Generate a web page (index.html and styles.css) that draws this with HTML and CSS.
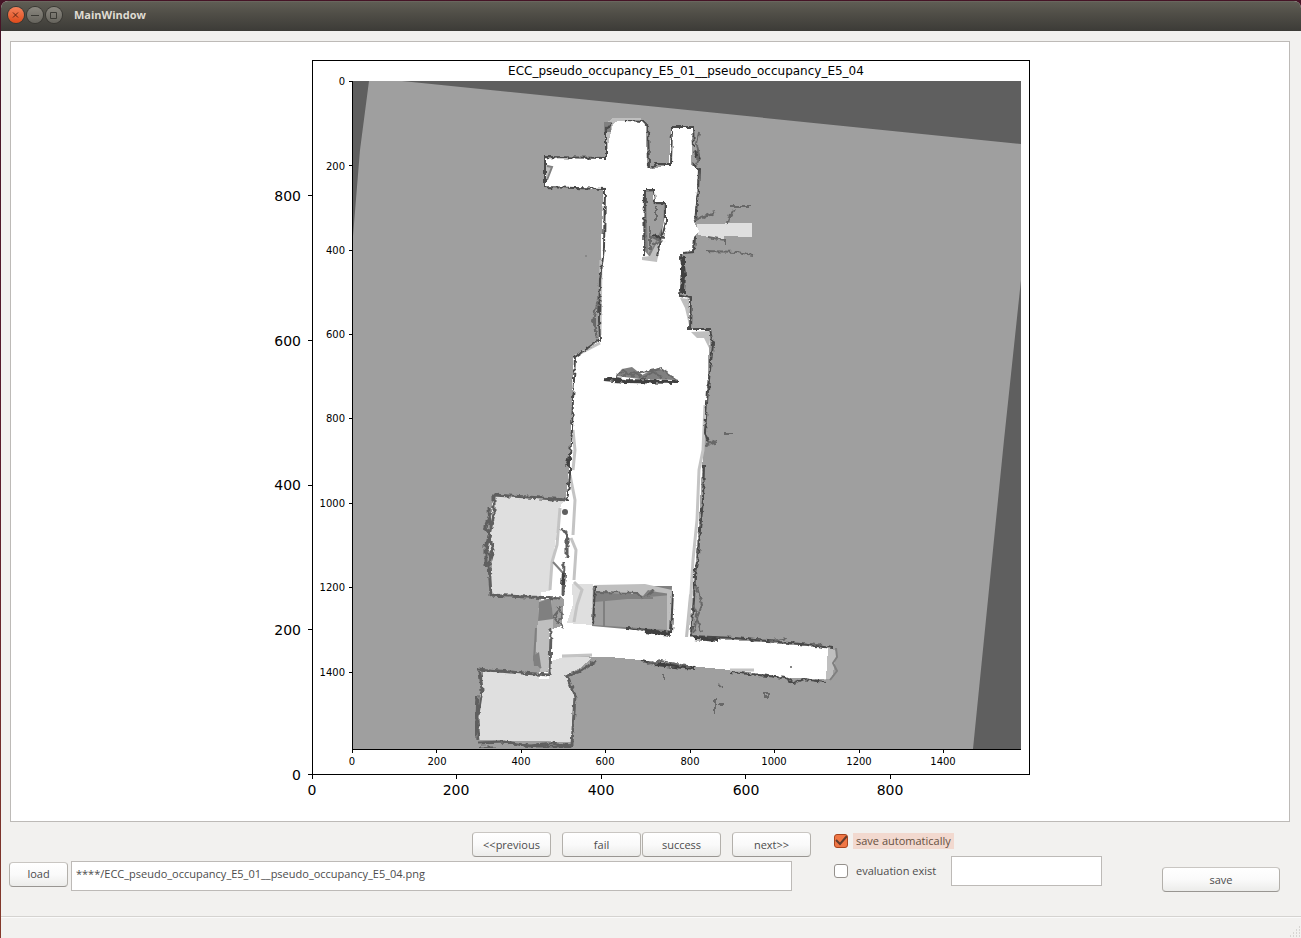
FILE: index.html
```html
<!DOCTYPE html>
<html lang="en">
<head>
<meta charset="utf-8">
<title>MainWindow</title>
<link rel="stylesheet" href="styles.css">
</head>
<body>
<div class="window">
  <header class="titlebar">
    <button class="win-btn close" type="button" aria-label="Close"><svg viewBox="0 0 16 16"><path d="M5 5.500l5 5m0-5l-5 5"/></svg></button>
    <button class="win-btn" type="button" aria-label="Minimize"><svg viewBox="0 0 16 16"><path d="M4 8.500h8"/></svg></button>
    <button class="win-btn" type="button" aria-label="Maximize"><svg viewBox="0 0 16 16"><path d="M4.500 5.500h6v6h-6z"/></svg></button>
    <h1 class="title">MainWindow</h1>
  </header>
  <main class="content">
    <section class="canvas">
      <svg class="figure" viewBox="11 42 1278 779" role="img" aria-label="Occupancy map overlay">
        <defs>
          <filter id="rough" x="0" y="0" width="1" height="1">
            <feTurbulence type="fractalNoise" baseFrequency="0.22" numOctaves="2" seed="4" result="n"/>
            <feDisplacementMap in="SourceGraphic" in2="n" scale="5" xChannelSelector="R" yChannelSelector="G"/>
          </filter>
          <clipPath id="area"><rect x="353" y="81" width="668" height="668"/></clipPath>
        </defs>
        <g clip-path="url(#area)">
          <rect class="g-mid" x="353" y="81" width="668" height="668"/>
          <path class="g-dark" d="M353 81h16L360 150 353 236zM402 81L1021 144V81zM1021 280L1004 440 973 749h48z"/>

          <g class="regions">
            <path class="g-pale" d="M494 496L562 499 566 540 561 597 490 594 492 560 488 545 490 515zM481 672L550 674 566 657 592 658 580 668 566 675 575 695 572 742 478 740 480 705z"/>
            <path class="g-pale" d="M697 224L752 223V237L724 236 724 240 698 235z"/>
            <path class="g-light" d="M539 600L552 600 553 634 549 640 549 670 541 674 536 650zM604 125L613 118H641V126L612 158H606zM828 646L837 652 832 678 824 680z"/>
            <path class="g-white" d="M606 158L609 140 613 124 618 121 641 121 646 125 647 168 653 169 669 164 671 127 693 127 691 165 698 168 697 190 694 222 699 231 694 236 693 251 681 254 680 296 690 298 690 329 711 330 708 360 707 400 704 440 702 470 699 520 696 560 693 590 690 637 760 642 828 648 826 679 790 678 740 671 700 667 640 660 610 657 570 656 561 668 549 668 549 630 562 626 564 600 561 596 541 600 541 592 550 591 552 565 557 530 559 512 563 500 566 497 569 470 571 440 573 358 599 341 600 300 601 250 603 189 545 187 545 158z"/>
            <path class="g-pale" d="M572 584L593 584 592 625 567 623 573 605zM548 662L566 656 590 657 566 675 548 672z"/>
            <path class="g-white" d="M539 672h10v7h-10z"/>
          </g>

          <path class="g-soft" d="M539 602L551 598 553 619 538 621zM645 190H653V202L666 203 665 215 657 259 649 256 644 250zM593 586H672L670 633 592 626zM604 122h7v10h-7zM533 656l6-4 2 14h-7z"/>
          <path class="g-mid" d="M646 192L653 192V204L664 205 663 225 654 245 648 254zM595 602L671 595 669 630 594 625z"/>
          <path class="g-light" d="M594 585L645 584 672 590 671 594 657 592 648 590 643 596 637 594 610 593 596 591zM667 593L673 592 672 632 667 632zM653 250L661 235 657 262 642 260 642 257 650 256zM685 637L689 595 693 590 688 637zM680 298L689 299 689 325 685 308zM691 332L711 331 709 348 704 338 697 338zM546 164l6 3-6 13z"/>
          <path class="s-light" d="M575 356L600 343M573 430L575 450 573 470M570 475L575 500 573 535M571 538L576 550 574 580M705 405L703 450 699 470 697 520 693 560 689 625M560 508L557 545 552 562 550 590M601 260L600 335M574 582L582 590 577 605 574 622M562 656l30-1M730 670h24"/>
          <path class="g-soft" d="M616 376L622 369 632 367 642 375 650 371 658 368 666 372 677 380 640 379z"/>
          <path class="s-soft" d="M597 598h56M604 592v34M553 562L564 574M536 628L534 660 541 668M836 648L837 657 833 663 837 671 830 680"/>
          <path class="s-soft" d="M547 166l5 1-5 13"/>

          <g class="rough">
            <path class="s-wall" d="M606 158L545 157V187L605 189 604 248 600 280 599 320 600 340 592 345 575 357 573 400 572 430 570 455 570 475 567 502M606 158L606 130 612 123M626 120L643 121 648 126 649 168M652 168L656 164 671 164 672 127 693 127 694 146M693 164L699 169 698 192 695 222M695 236L694 252 683 253M681 254L683 275 680 296 691 298 690 329 710 329 713 345 710 370 708 390 707 403 705 432 708 442M704 465L703 500 700 530 698 555 695 575 694 600 691 636M645 190L644 257M654 191L655 203 666 203M666 204L666 222 657 256M647 190h8M691 636L735 638 768 641 800 644 833 648M641 661L668 666 694 667M731 672L785 678 794 683 803 679 825 682M595 586L593 625M673 592L671 633M627 628L671 633"/>
            <path class="s-room" d="M493 495L528 497 566 500M494 496V514L489 535 493 550 489 564 491 595 526 597 561 598M489 508L490 530 486 550 486 567M491 512L485 527 491 536 485 546 491 558M562 530L567 533 567 558M564 562L563 596M551 628L550 674M478 669L510 672 549 675M480 672L482 690 477 720 479 739M477 695L475 738M478 743L505 742 530 746 551 743 572 746M479 748h17M535 747h36M596 661L581 671 567 676 575 696 572 745"/>
            <path class="s-heavy" d="M604 379L625 381 678 382M656 664L694 668M682 256L684 275 683 292M683 258v36M694 638L718 640M564 573L563 585M645 631L671 634M570 456L567 466M654 234l7 6M696 151l3 9"/>
            <path class="s-thin" d="M615 377L623 371 632 376 640 372 650 371 661 369 677 380M622 376l12-4 9 6 10-6 8 5M699 132L697 145 699 155 696 164M694 220L716 212M702 219l11-6M729 206L750 206M734 210L727 222M730 214l-3 9M706 251L738 252 753 255M708 237l17 3v4M724 434h9M706 445L716 440M707 445l8-2M697 587L702 605 697 618 701 632M693 605l4 10-3 18M562 606L554 616 563 628M556 606l7 9-6 9M598 300L593 320 597 338M595 318v14M597 592L637 593 643 599M646 596l8-6M650 236L661 241 652 245M650 226v24M656 207v14M719 685L722 687M765 693h4v4h-4zM715 698V713M718 704h7M664 674V680M773 641l13-3M810 643l12 2M647 664l14-3 30 6"/>
          </g>
          <circle class="g-dark" cx="565" cy="512" r="3"/><circle class="g-dark" cx="791" cy="667" r="1"/><circle class="g-soft" cx="586" cy="256" r="1"/>
        </g>

        <g class="axis">
          <path d="M312.500 774.500V60.500H1029.500V774.500H308M312.500 774v5M456.500 774v5M601.500 774v5M745.500 774v5M890.500 774v5M308 629.500h4M308 485.500h4M308 340.500h4M308 195.500h4"/>
          <path d="M352.500 81V749M352 749.500H1021M349 81.500h3M349 165.500h3M349 250.500h3M349 334.500h3M349 418.500h3M349 503.500h3M349 587.500h3M349 672.500h3M352.500 750v3M436.500 750v3M521.500 750v3M605.500 750v3M690.500 750v3M774.500 750v3M859.500 750v3M943.500 750v3"/>
        </g>
        <text class="plot-title" x="686" y="75">ECC_pseudo_occupancy_E5_01__pseudo_occupancy_E5_04</text>
        <g class="outer y">
          <text x="301" y="201">800</text><text x="301" y="346">600</text><text x="301" y="490">400</text><text x="301" y="635">200</text><text x="301" y="780">0</text>
        </g>
        <g class="outer">
          <text x="312" y="795">0</text><text x="456" y="795">200</text><text x="601" y="795">400</text><text x="746" y="795">600</text><text x="890" y="795">800</text>
        </g>
        <g class="inner y">
          <text x="345" y="85">0</text><text x="345" y="170">200</text><text x="345" y="254">400</text><text x="345" y="338">600</text><text x="345" y="422">800</text><text x="345" y="507">1000</text><text x="345" y="591">1200</text><text x="345" y="676">1400</text>
        </g>
        <g class="inner">
          <text x="352" y="765">0</text><text x="437" y="765">200</text><text x="521" y="765">400</text><text x="605" y="765">600</text><text x="690" y="765">800</text><text x="774" y="765">1000</text><text x="859" y="765">1200</text><text x="943" y="765">1400</text>
        </g>
      </svg>
    </section>
    <section class="controls">
      <div class="files">
        <nav class="steps">
          <button class="btn" type="button">&lt;&lt;previous</button>
          <div class="verdict"><button class="btn" type="button">fail</button><button class="btn" type="button">success</button></div>
          <button class="btn" type="button">next&gt;&gt;</button>
        </nav>
        <div class="path-row">
          <button class="btn load" type="button">load</button>
          <input class="field path" type="text" aria-label="Image path" value="****/ECC_pseudo_occupancy_E5_01__pseudo_occupancy_E5_04.png">
        </div>
      </div>
      <div class="options">
        <label class="check"><input type="checkbox" checked><span class="label-text focus">save automatically</span></label>
        <div class="exist-row">
          <label class="check"><input type="checkbox"><span class="label-text">evaluation exist</span></label>
          <input class="field result" type="text" aria-label="Evaluation">
        </div>
      </div>
      <button class="btn save" type="button">save</button>
    </section>
  </main>
  <footer class="statusbar">
    <svg class="grip" viewBox="0 0 12 12"><path d="M10 1h1M7 4h1M10 4h1M4 7h1M7 7h1M10 7h1M1 10h1M4 10h1M7 10h1M10 10h1"/></svg>
  </footer>
</div>
</body>
</html>
```
FILE: styles.css
```css
* { box-sizing: border-box; }
body {
  margin: 0;
  height: 100vh;
  padding: 1px 0 0 1px;
  background: linear-gradient(#451426, #5c1c2c 50%, #853a2b);
  font-family: "Open Sans", "Noto Sans", sans-serif;
  font-size: 11px;
  color: #4c4c4c;
}
.window {
  display: flex;
  flex-direction: column;
  height: 100%;
  border-radius: 7px 7px 0 0;
  overflow: hidden;
  background: #f2f1ef;
}
.titlebar {
  display: flex;
  align-items: center;
  gap: 3px;
  height: 30px;
  padding: 0 7px 3px;
  background: linear-gradient(#5f5d54, #504e47 40%, #3c3b37);
  border-top: 1px solid #69665e;
}
.win-btn {
  width: 16px;
  height: 16px;
  padding: 0;
  border: 0;
  border-radius: 50%;
  background: linear-gradient(#8b8880, #66645d);
  box-shadow: 0 0 0 1px #393833;
}
.win-btn svg { display: block; fill: none; stroke: #3b3a35; stroke-width: 1; }
.win-btn.close { background: linear-gradient(#f4825b, #df4b1b); }
.win-btn.close svg { stroke: #5a2412; }
.title {
  margin: 0 0 0 9px;
  font-size: 11px;
  line-height: 16px;
  font-weight: bold;
  color: #dfdbd2;
}
.content {
  display: flex;
  flex-direction: column;
  flex: 1;
  min-height: 0;
  padding: 10px 11px 0 9px;
}
.canvas {
  flex: 1;
  min-height: 0;
  border: 1px solid #bdbab7;
  background: #fff;
}
.figure { display: block; width: 100%; height: 100%; font-family: "DejaVu Sans", sans-serif; fill: #000; }
.plot-title { font-size: 12px; text-anchor: middle; }
.outer { font-size: 14px; text-anchor: middle; }
.inner { font-size: 10px; text-anchor: middle; }
.y { text-anchor: end; }
.axis { fill: none; stroke: #000; stroke-width: 1; shape-rendering: crispEdges; }
.g-mid { fill: #9f9f9f; }
.g-dark { fill: #5f5f5f; }
.g-soft { fill: #808080; }
.g-light { fill: #bfbfbf; }
.g-pale { fill: #dfdfdf; }
.g-white { fill: #fff; }
.regions { shape-rendering: crispEdges; }
.rough { filter: url(#rough); }
.s-light, .s-soft, .s-wall, .s-room, .s-heavy, .s-thin { fill: none; }
.s-light { stroke: #c4c4c4; stroke-width: 3; }
.s-soft { stroke: #808080; stroke-width: 2; }
.s-wall { stroke: #484848; stroke-width: 2; }
.s-room { stroke: #5f5f5f; stroke-width: 3; }
.s-heavy { stroke: #404040; stroke-width: 4; }
.s-thin { stroke: #686868; stroke-width: 2; }
.controls {
  display: flex;
  align-items: flex-start;
  padding: 10px 10px 24px 0;
}
.files { flex: 1; margin-left: -1px; }
.steps { display: flex; justify-content: flex-end; gap: 11px; }
.verdict { display: flex; gap: 1px; }
.btn {
  width: 79px;
  height: 25px;
  padding: 0 0 1px;
  border: 1px solid #b3b0ab;
  border-top-color: #c9c6c2;
  border-bottom-color: #999692;
  border-radius: 4px;
  background: linear-gradient(#fff, #fafafa 50%, #ececea);
  font: inherit;
  color: #4c4c4c;
}
.path-row { display: flex; align-items: center; gap: 3px; margin-top: 4px; padding-right: 19px; }
.btn.load { width: 59px; flex: none; margin-bottom: 4px; }
.field {
  height: 30px;
  border: 1px solid #bdbab7;
  background: #fff;
  font: inherit;
  color: #4c4c4c;
}
.path { flex: 1; min-width: 0; padding: 0 4px 5px; }
.options { display: flex; flex-direction: column; gap: 6px; width: 268px; margin-left: 23px; }
.check { display: flex; align-items: center; gap: 5px; }
.check input {
  appearance: none;
  width: 14px;
  height: 14px;
  margin: 0;
  border: 1px solid #95918c;
  border-radius: 3px;
  background: #fff;
}
.check input:checked {
  border-color: #a9451f;
  background: #f07746 url("data:image/svg+xml,%3Csvg xmlns='http://www.w3.org/2000/svg' viewBox='0 0 14 14'%3E%3Cpath d='M2 6l4 4L13 2' fill='none' stroke='%23643d2e' stroke-width='2'/%3E%3C/svg%3E") center / 14px 14px no-repeat;
}
.label-text { padding: 0 3px; line-height: 16px; }
.label-text.focus { background: #f2d9cf; color: #66503f; }
.options > .check { height: 18px; }
.exist-row { display: flex; justify-content: space-between; align-items: center; }
.result { width: 151px; }
.btn.save { width: 118px; margin: 35px 0 0 60px; }
.statusbar {
  display: flex;
  justify-content: flex-end;
  align-items: flex-end;
  height: 22px;
  border-top: 1px solid #d5d3d0;
  box-shadow: inset 0 1px #fafafa;
}
.grip { width: 12px; height: 12px; stroke: #bdbab7; stroke-width: 1; }
```
